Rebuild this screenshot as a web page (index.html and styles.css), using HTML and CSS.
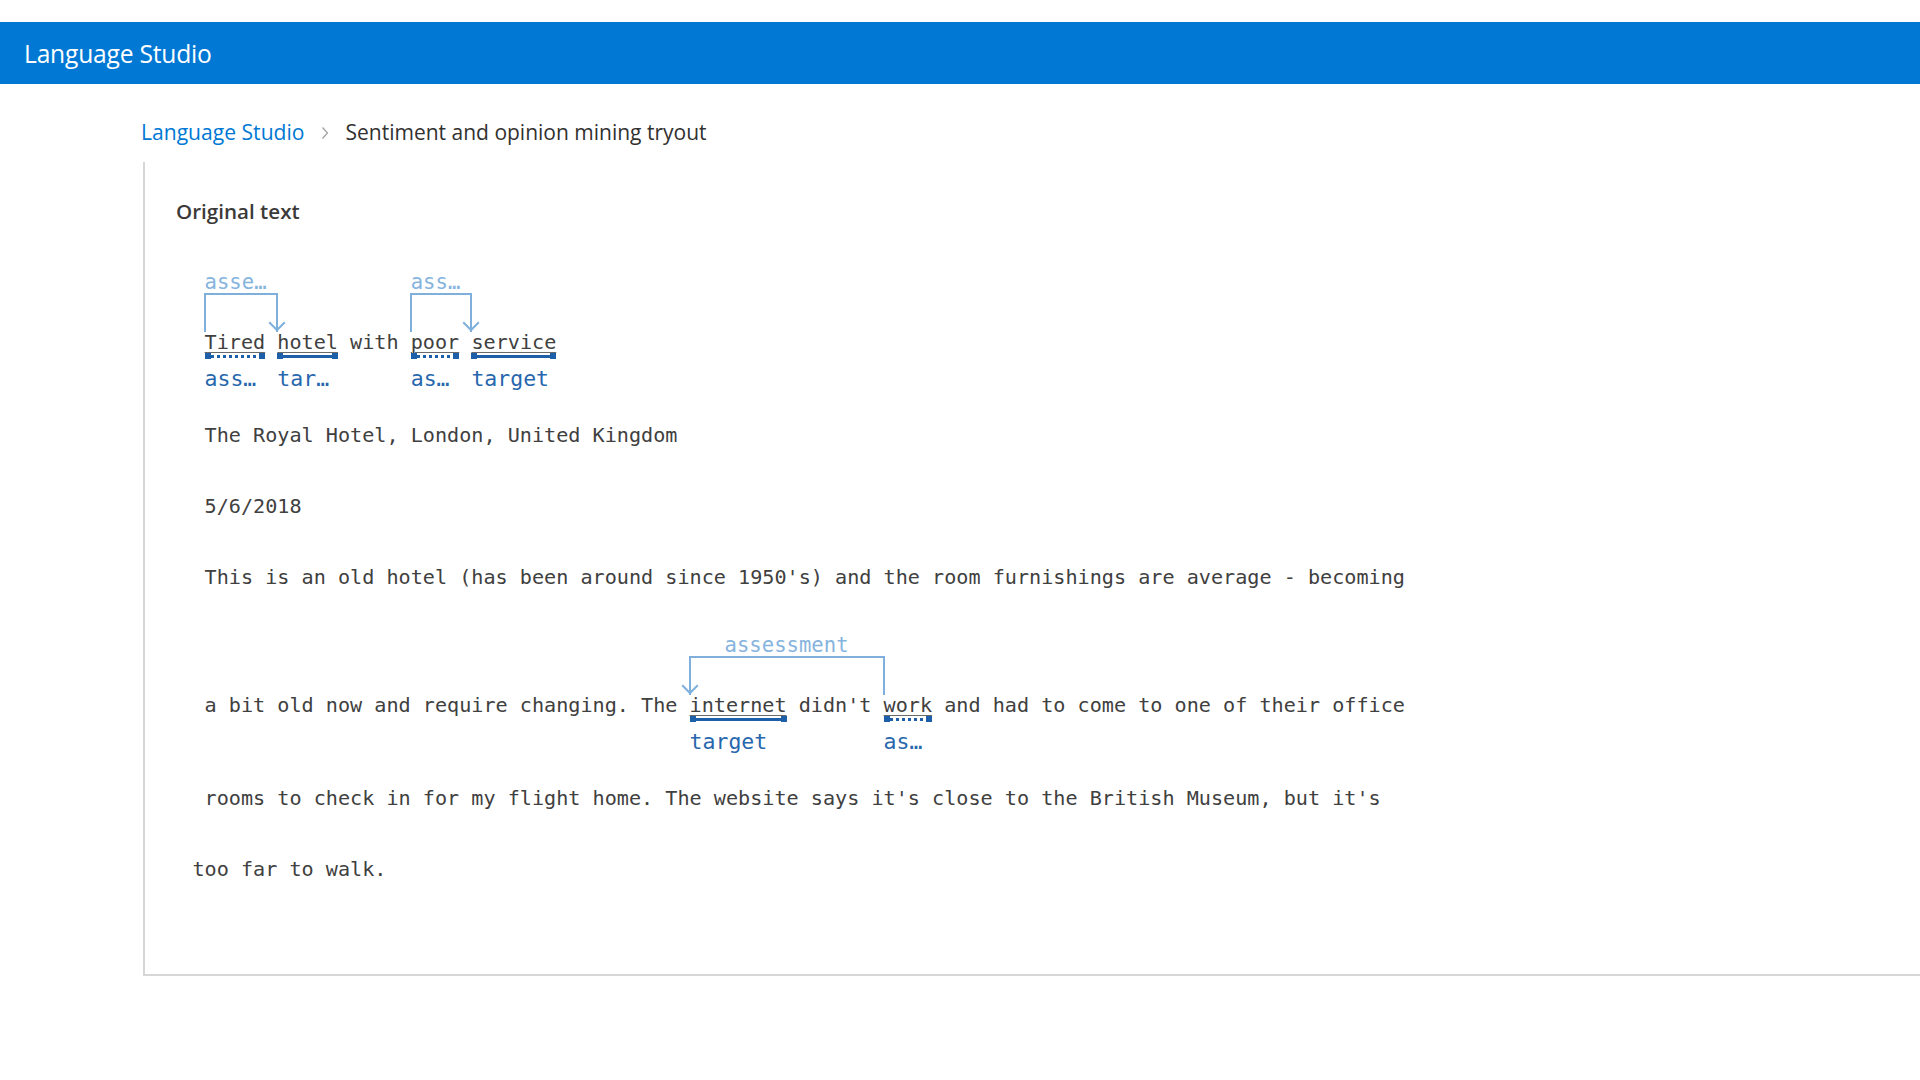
FILE: index.html
```html
<!DOCTYPE html>
<html lang="en">
<head>
<meta charset="utf-8">
<title>Language Studio - Sentiment and opinion mining tryout</title>
<link rel="stylesheet" href="styles.css">
</head>
<body>
<header class="topbar"><span class="brand">Language Studio</span></header>
<nav class="crumbs">
  <a class="crumb-link" href="#">Language Studio</a>
  <svg class="chev" width="8" height="14" viewBox="0 0 8 14"><polyline points="1.5,1.5 6.5,7 1.5,12.5" fill="none" stroke="#a19f9d" stroke-width="1.2"/></svg>
  <span class="crumb-current">Sentiment and opinion mining tryout</span>
</nav>
<section class="panel">
  <h2 class="panel-title">Original text</h2>
  <div class="doc">
    <div class="line annot">
      <span class="tok"><span class="w"> </span></span>
      <span class="tok">
        <span class="rel span6 arrow-right"><span class="rlabel trunc">asse…</span><span class="bracket"></span><span class="head"></span></span>
        <span class="w mark">Tired</span><span class="u dot"></span><span class="lbl">ass…</span>
      </span>
      <span class="tok"><span class="w"> </span></span>
      <span class="tok"><span class="w mark">hotel</span><span class="u"></span><span class="lbl">tar…</span></span>
      <span class="tok"><span class="w"> with </span></span>
      <span class="tok">
        <span class="rel span5 arrow-right"><span class="rlabel trunc">ass…</span><span class="bracket"></span><span class="head"></span></span>
        <span class="w mark">poor</span><span class="u dot"></span><span class="lbl">as…</span>
      </span>
      <span class="tok"><span class="w"> </span></span>
      <span class="tok"><span class="w mark">service</span><span class="u"></span><span class="lbl">target</span></span>
    </div>
    <div class="line"> The Royal Hotel, London, United Kingdom</div>
    <div class="line"> 5/6/2018</div>
    <div class="line"> This is an old hotel (has been around since 1950's) and the room furnishings are average - becoming</div>
    <div class="line annot">
      <span class="tok"><span class="w"> a bit old now and require changing. The </span></span>
      <span class="tok">
        <span class="rel span16 arrow-left"><span class="rlabel">assessment</span><span class="bracket"></span><span class="head"></span></span>
        <span class="w mark">internet</span><span class="u"></span><span class="lbl">target</span>
      </span>
      <span class="tok"><span class="w"> didn't </span></span>
      <span class="tok"><span class="w mark">work</span><span class="u dot"></span><span class="lbl">as…</span></span>
      <span class="tok"><span class="w"> and had to come to one of their office</span></span>
    </div>
    <div class="line"> rooms to check in for my flight home. The website says it's close to the British Museum, but it's</div>
    <div class="line">too far to walk.</div>
  </div>
</section>
</body>
</html>
```
FILE: styles.css
```css
html, body {
  margin: 0;
  padding: 0;
  background: #ffffff;
  overflow: hidden;
}
body {
  font-family: "Open Sans", "Noto Sans", "Liberation Sans", sans-serif;
  color: #323130;
  width: 1920px;
  height: 1080px;
}

.topbar {
  margin-top: 22px;
  height: 62px;
  background: #0078d4;
  display: flex;
  align-items: center;
  padding-left: 24px;
}
.brand {
  color: #ffffff;
  font-size: 24.6px;
  line-height: 32px;
  letter-spacing: -0.2px;
  margin-top: 2px;
}

.crumbs {
  display: flex;
  align-items: center;
  height: 30px;
  margin: 33px 0 15px 141px;
  font-size: 21.1px;
  line-height: 30px;
}
.crumb-link {
  color: #0078d4;
  text-decoration: none;
}
.chev {
  margin: 2px 17px 0 16px;
}
.crumb-current {
  color: #323130;
  font-size: 21px;
}

.panel {
  margin-left: 143px;
  width: 1900px;
  border-left: 2px solid #d6d6d6;
  border-bottom: 2px solid #d6d6d6;
  padding: 36px 0 69px 31px;
  box-sizing: border-box;
}
.panel-title {
  margin: 0;
  font-size: 20.6px;
  font-weight: 600;
  line-height: 26px;
  color: #3b3a39;
}

.doc {
  margin: 25.8px 0 0 16.4px;
  font-family: "DejaVu Sans Mono", "Liberation Mono", monospace;
  font-size: 20.15px;
  color: #404040;
}
.line {
  padding: 22.5px 0;
  line-height: 26px;
  height: 26px;
  white-space: pre;
}
.line.annot {
  height: auto;
  padding: 21px 0 8px;
  display: flex;
  align-items: flex-start;
}
.tok {
  display: flex;
  flex-direction: column;
  padding-top: 58px;
  position: relative;
}
.w {
  display: block;
  height: 26px;
  line-height: 26px;
  white-space: pre;
}
.w.mark {
  text-decoration: underline;
  text-decoration-color: #6b6b6b;
  text-decoration-thickness: 1px;
  text-underline-offset: 3px;
}
.u {
  position: relative;
  height: 3px;
  margin: 0 0 8px;
  background: #1d5fa8;
}
.u.dot {
  background: repeating-linear-gradient(90deg, #1d5fa8 0 3px, transparent 3px 6px);
}
.u::before, .u::after {
  content: "";
  position: absolute;
  top: -1.5px;
  width: 6px;
  height: 6px;
  background: #1d5fa8;
}
.u::before { left: 0; }
.u::after { right: 0; }
.lbl {
  display: block;
  height: 26px;
  line-height: 26px;
  font-size: 21.5px;
  color: #2767ad;
  white-space: nowrap;
}

.rel {
  position: absolute;
  top: 0;
  left: -1px;
  height: 61px;
}
.span5 { width: calc(5ch + 2px); }
.span6 { width: calc(6ch + 2px); }
.span16 { width: calc(16ch + 2px); }
.rlabel {
  position: absolute;
  top: -2px;
  left: 0;
  right: 0;
  line-height: 26px;
  font-size: 20.6px;
  text-align: center;
  white-space: nowrap;
  overflow: visible;
  color: #86b4de;
}
.rlabel.trunc {
  text-align: left;
  left: 1px;
}
.bracket {
  position: absolute;
  left: 0;
  right: 0;
  top: 22px;
  bottom: 0;
  border: 2px solid #7fb0dc;
  border-bottom: none;
}
.head {
  position: absolute;
  top: 46.5px;
  width: 12px;
  height: 12px;
  box-sizing: border-box;
  border-right: 2px solid #7fb0dc;
  border-bottom: 2px solid #7fb0dc;
  transform: rotate(45deg);
}
.arrow-right .head { right: -5px; }
.arrow-left .head { left: -5px; }
```
